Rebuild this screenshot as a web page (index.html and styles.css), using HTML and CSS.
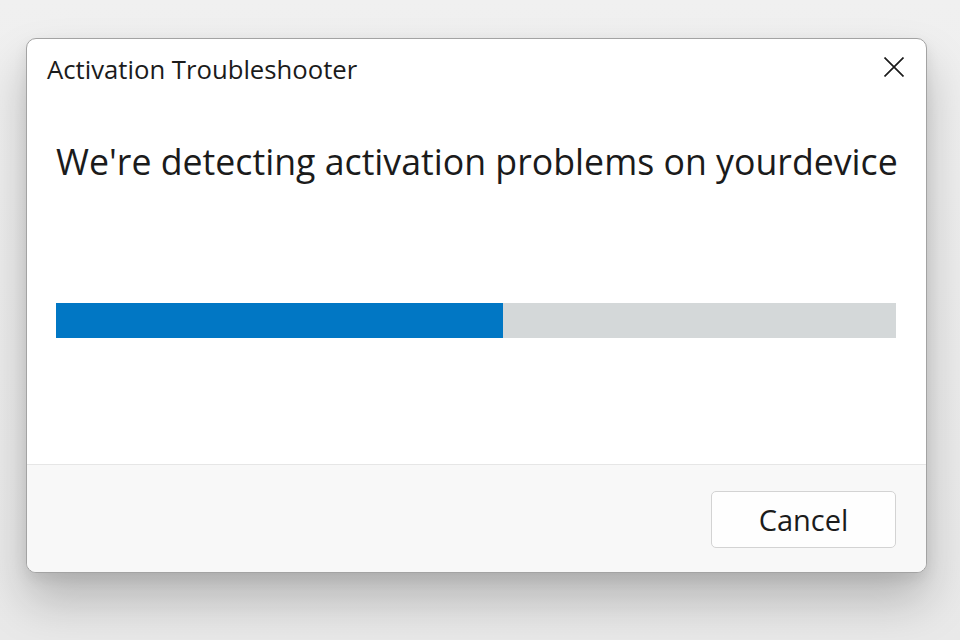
FILE: index.html
```html
<!DOCTYPE html>
<html lang="en">
<head>
<meta charset="utf-8">
<title>Activation Troubleshooter</title>
<link rel="stylesheet" href="styles.css">
</head>
<body>
<div class="desk">
  <div class="dialog">
    <div class="titlebar">
      <span class="title">Activation Troubleshooter</span>
      <button class="close" aria-label="Close">
        <svg width="20" height="20" viewBox="0 0 20 20"><path d="M0.5 0.5 L19.5 19.5 M19.5 0.5 L0.5 19.5" stroke="#1c1c1c" stroke-width="1.7" fill="none"/></svg>
      </button>
    </div>
    <div class="content">
      <h1 class="heading">We're detecting activation problems on yourdevice</h1>
      <div class="progress"><div class="fill" style="width:53.2%"></div></div>
    </div>
    <div class="footer">
      <button class="btn">Cancel</button>
    </div>
  </div>
</div>
</body>
</html>
```
FILE: styles.css
```css
* { box-sizing: border-box; }
html, body { margin: 0; padding: 0; }
body {
  width: 960px;
  height: 640px;
  overflow: hidden;
  background: linear-gradient(#f0f0f0, #e9e9e9);
  font-family: "Open Sans", "Noto Sans", sans-serif;
  color: #1b1b1b;
}
.desk {
  padding: 38px 0 0 26px;
}
.dialog {
  width: 901px;
  height: 535px;
  background: #ffffff;
  border: 1px solid #a3a3a3;
  border-radius: 10px;
  display: flex;
  flex-direction: column;
  overflow: hidden;
  box-shadow: 0 28px 48px rgba(0,0,0,0.22), 0 6px 14px rgba(0,0,0,0.08);
}
.titlebar {
  height: 62px;
  display: flex;
  align-items: flex-start;
  justify-content: space-between;
  padding: 15px 22px 0 20px;
}
.title {
  font-size: 25.7px;
  line-height: 32px;
}
.close {
  margin-top: 3px;
  width: 20px;
  height: 20px;
  padding: 0;
  border: 0;
  background: none;
  display: block;
}
.close svg { display: block; }
.content {
  flex: 1;
  padding: 36px 30px 0 29px;
}
.heading {
  margin: 0;
  font-weight: 400;
  font-size: 35.7px;
  line-height: 48px;
  white-space: nowrap;
}
.progress {
  margin-top: 118px;
  height: 35px;
  background: #d4d8d9;
  display: flex;
}
.fill {
  height: 100%;
  background: #0177c4;
}
.footer {
  height: 108px;
  border-top: 1px solid #e6e6e6;
  background: #f8f8f8;
  display: flex;
  justify-content: flex-end;
  align-items: flex-start;
  padding: 26px 30px 0 0;
}
.btn {
  width: 185px;
  height: 57px;
  background: #fefefe;
  border: 1px solid #d3d3d3;
  border-radius: 5px;
  font-family: inherit;
  font-size: 29px;
  color: #1b1b1b;
  padding: 0;
}
```
